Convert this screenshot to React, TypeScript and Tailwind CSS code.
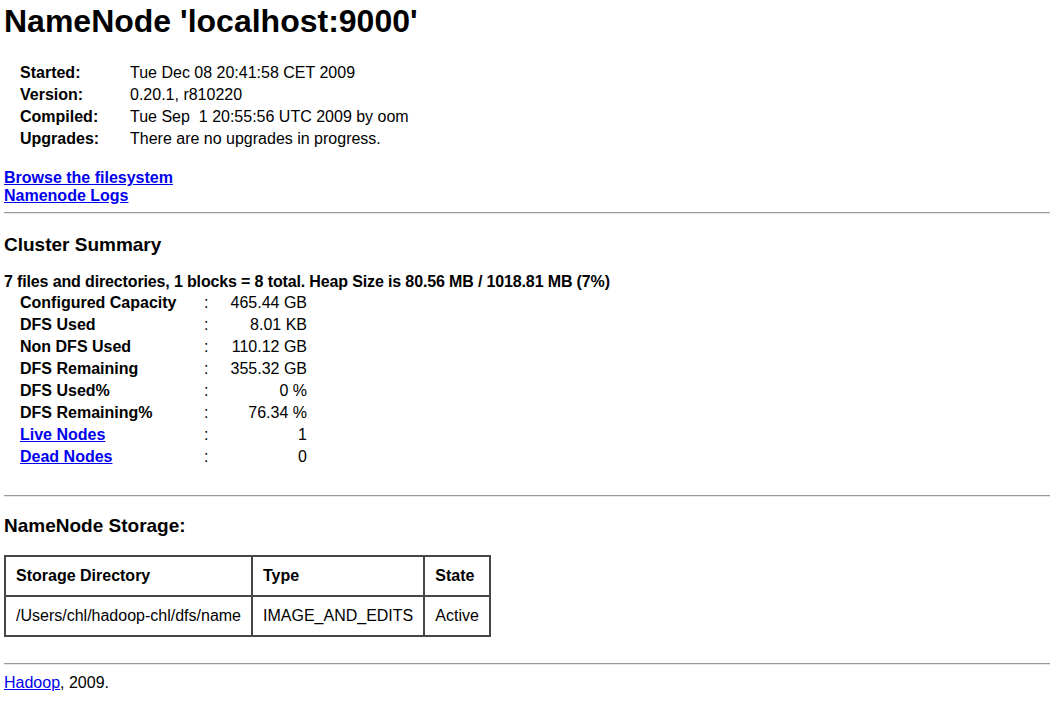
import React from "react";

const info: [string, string][] = [
  ["Started:", "Tue Dec 08 20:41:58 CET 2009"],
  ["Version:", "0.20.1, r810220"],
  ["Compiled:", "Tue Sep\u00a0 1 20:55:56 UTC 2009 by oom"],
  ["Upgrades:", "There are no upgrades in progress."],
];

const summary: { label: string; value: string; link?: boolean }[] = [
  { label: "Configured Capacity", value: "465.44 GB" },
  { label: "DFS Used", value: "8.01 KB" },
  { label: "Non DFS Used", value: "110.12 GB" },
  { label: "DFS Remaining", value: "355.32 GB" },
  { label: "DFS Used%", value: "0 %" },
  { label: "DFS Remaining%", value: "76.34 %" },
  { label: "Live Nodes", value: "1", link: true },
  { label: "Dead Nodes", value: "0", link: true },
];

function Hr({ className = "" }: { className?: string }) {
  return <div className={"h-0 border-t border-b border-t-[#9a9a9a] border-b-[#e6e6e6] " + className} />;
}

export default function App() {
  return (
    <div
      className="min-h-[704px] bg-white px-[4px] text-[16px] leading-[18px] text-black"
      style={{ fontFamily: '"Liberation Sans", Arial, Helvetica, sans-serif' }}
    >
      <h1 className="pt-[3px] text-[32px] leading-[36px] font-bold">NameNode 'localhost:9000'</h1>

      <div className="mt-[23px] ml-[16px] flex flex-col">
        {info.map(([k, v]) => (
          <div key={k} className="flex py-[2px]">
            <div className="w-[110px] font-bold">{k}</div>
            <div className="whitespace-pre">{v}</div>
          </div>
        ))}
      </div>

      <div className="mt-[19px] flex flex-col items-start font-bold">
        <a href="#" className="text-[#0000ee] underline">Browse the filesystem</a>
        <a href="#" className="text-[#0000ee] underline">Namenode Logs</a>
      </div>

      <Hr className="mt-[7px]" />

      <h3 className="mt-[20px] text-[19px] leading-[22px] font-bold">Cluster Summary</h3>

      <div className="mt-[17px] font-bold tracking-[-0.14px]">
        7 files and directories, 1 blocks = 8 total. Heap Size is 80.56 MB / 1018.81 MB (7%)
      </div>

      <div className="mt-[1px] ml-[16px] flex flex-col">
        {summary.map((r) => (
          <div key={r.label} className="flex py-[2px]">
            <div className="w-[184px] font-bold">
              {r.link ? (
                <a href="#" className="text-[#0000ee] underline">{r.label}</a>
              ) : (
                r.label
              )}
            </div>
            <div className="w-[16px]">:</div>
            <div className="w-[87px] text-right">{r.value}</div>
          </div>
        ))}
      </div>

      <Hr className="mt-[27px]" />

      <h3 className="mt-[18px] text-[19px] leading-[22px] font-bold">NameNode Storage:</h3>

      <table className="mt-[18px] border-collapse border-2 border-[#474747]">
        <thead>
          <tr>
            <th className="border-2 border-[#474747] px-[10px] py-[10px] text-left font-bold">Storage Directory</th>
            <th className="border-2 border-[#474747] px-[10px] py-[10px] text-left font-bold">Type</th>
            <th className="border-2 border-[#474747] px-[10px] py-[10px] text-left font-bold">State</th>
          </tr>
        </thead>
        <tbody>
          <tr>
            <td className="border-2 border-[#474747] px-[10px] py-[10px]">/Users/chl/hadoop-chl/dfs/name</td>
            <td className="border-2 border-[#474747] px-[10px] py-[10px]">IMAGE_AND_EDITS</td>
            <td className="border-2 border-[#474747] px-[10px] py-[10px]">Active</td>
          </tr>
        </tbody>
      </table>

      <Hr className="mt-[26px]" />

      <div className="mt-[9px]">
        <a href="#" className="text-[#0000ee] underline">Hadoop</a>, 2009.
      </div>
    </div>
  );
}
